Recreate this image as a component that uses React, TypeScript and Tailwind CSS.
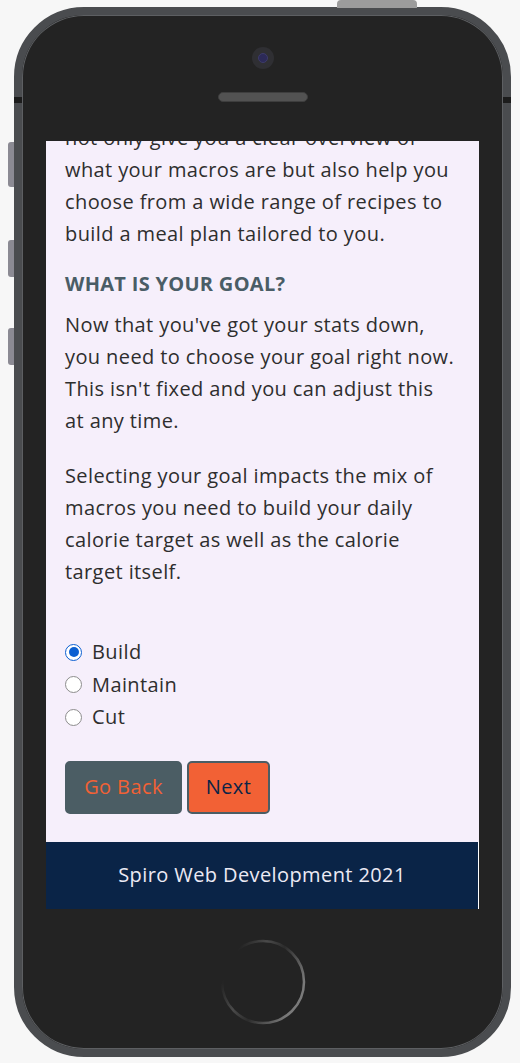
import React, { useState } from "react";

const goals = ["Build", "Maintain", "Cut"];

function Radio({ checked }: { checked: boolean }) {
  return checked ? (
    <span className="w-[17px] h-[17px] rounded-full border-[1.5px] border-[#0b5fd1] bg-white flex items-center justify-center shrink-0">
      <span className="w-[10px] h-[10px] rounded-full bg-[#0b5fd1]" />
    </span>
  ) : (
    <span className="w-[17px] h-[17px] rounded-full border border-[#8d8d8d] bg-white shrink-0" />
  );
}

function HomeButton() {
  return (
    <svg width="88" height="88" viewBox="0 0 88 88">
      <defs>
        <linearGradient id="homeRing" x1="0.1" y1="0.3" x2="0.9" y2="0.7">
          <stop offset="0" stopColor="#232323" />
          <stop offset="0.3" stopColor="#4a4a4a" />
          <stop offset="0.55" stopColor="#2c2c2c" />
          <stop offset="1" stopColor="#7a7a7a" />
        </linearGradient>
      </defs>
      <circle cx="44" cy="44" r="41" fill="none" stroke="url(#homeRing)" strokeWidth="2.5" />
    </svg>
  );
}

export default function App() {
  const [goal, setGoal] = useState("Build");

  return (
    <div
      className="min-h-[1063px] bg-[#f7f7f7] flex pl-[14px] pt-[7px]"
      style={{ fontFamily: "'Open Sans', Lato, sans-serif" }}
    >
      <div className="relative w-[497px] h-[1050px] rounded-[70px] border-[8px] border-[#4a4c4f] bg-[#232323] flex flex-col items-center shadow-[inset_0_0_0_1px_#5d5f62]">
        {/* hardware buttons */}
        <div className="absolute -top-[15px] left-[315px] w-[80px] h-[8px] rounded-t-[4px] bg-[#9c9c9c]" />
        <div className="absolute -left-[14px] top-[127px] w-[6px] h-[45px] rounded-l-[3px] bg-[#8b8a93]" />
        <div className="absolute -left-[14px] top-[225px] w-[6px] h-[37px] rounded-l-[3px] bg-[#8b8a93]" />
        <div className="absolute -left-[14px] top-[313px] w-[6px] h-[37px] rounded-l-[3px] bg-[#8b8a93]" />
        <div className="absolute -left-[8px] top-[82px] w-[8px] h-[6px] bg-[#1c1c1c]" />
        <div className="absolute -right-[8px] top-[82px] w-[8px] h-[6px] bg-[#1c1c1c]" />

        {/* camera + speaker */}
        <div className="mt-[32px] w-[22px] h-[22px] rounded-full bg-[#2f2f33] flex items-center justify-center">
          <div className="w-[10px] h-[10px] rounded-full bg-[#2c2a58] border border-[#3d3b6a]" />
        </div>
        <div className="mt-[23px] w-[90px] h-[10px] rounded-full bg-[#525252] border border-[#3e3e3e]" />

        {/* screen */}
        <div className="mt-[39px] w-[433px] h-[768px] overflow-hidden bg-white flex flex-col">
          <div className="bg-[#f6effb] px-[19px] pb-[28px] text-[20px] tracking-[0.4px] leading-[32px] text-[#2e2e2e]">
            <p className="-mt-[19px]">
              not only give you a clear overview of
              <br />
              what your macros are but also help you
              <br />
              choose from a wide range of recipes to
              <br />
              build a meal plan tailored to you.
            </p>
            <h2 className="mt-[22px] text-[20px] tracking-[0.3px] leading-[24px] font-bold text-[#4a5d66]">
              WHAT IS YOUR GOAL?
            </h2>
            <p className="mt-[13px]">
              Now that you've got your stats down,
              <br />
              you need to choose your goal right now.
              <br />
              This isn't fixed and you can adjust this
              <br />
              at any time.
            </p>
            <p className="mt-[23px]">
              Selecting your goal impacts the mix of
              <br />
              macros you need to build your daily
              <br />
              calorie target as well as the calorie
              <br />
              target itself.
            </p>
            <div className="mt-[48px] flex flex-col">
              {goals.map((g) => (
                <label
                  key={g}
                  className="h-[32.5px] flex items-center gap-[10px] cursor-pointer"
                  onClick={() => setGoal(g)}
                >
                  <Radio checked={goal === g} />
                  <span>{g}</span>
                </label>
              ))}
            </div>
            <div className="mt-[27px] flex gap-[5px]">
              <button className="w-[117px] h-[53px] rounded-[5px] border-2 border-[#4b5d64] bg-[#4b5d64] text-[#f26135]">
                Go Back
              </button>
              <button className="w-[83px] h-[53px] rounded-[5px] border-2 border-[#4b5d64] bg-[#f26135] text-[#0b2447]">
                Next
              </button>
            </div>
          </div>
          <footer className="w-[432px] h-[67px] shrink-0 bg-[#0a2447] flex items-center justify-center text-[20px] tracking-[0.4px] text-[#eceaf4]">
            Spiro Web Development 2021
          </footer>
        </div>

        <div className="mt-[29px]">
          <HomeButton />
        </div>
      </div>
    </div>
  );
}
